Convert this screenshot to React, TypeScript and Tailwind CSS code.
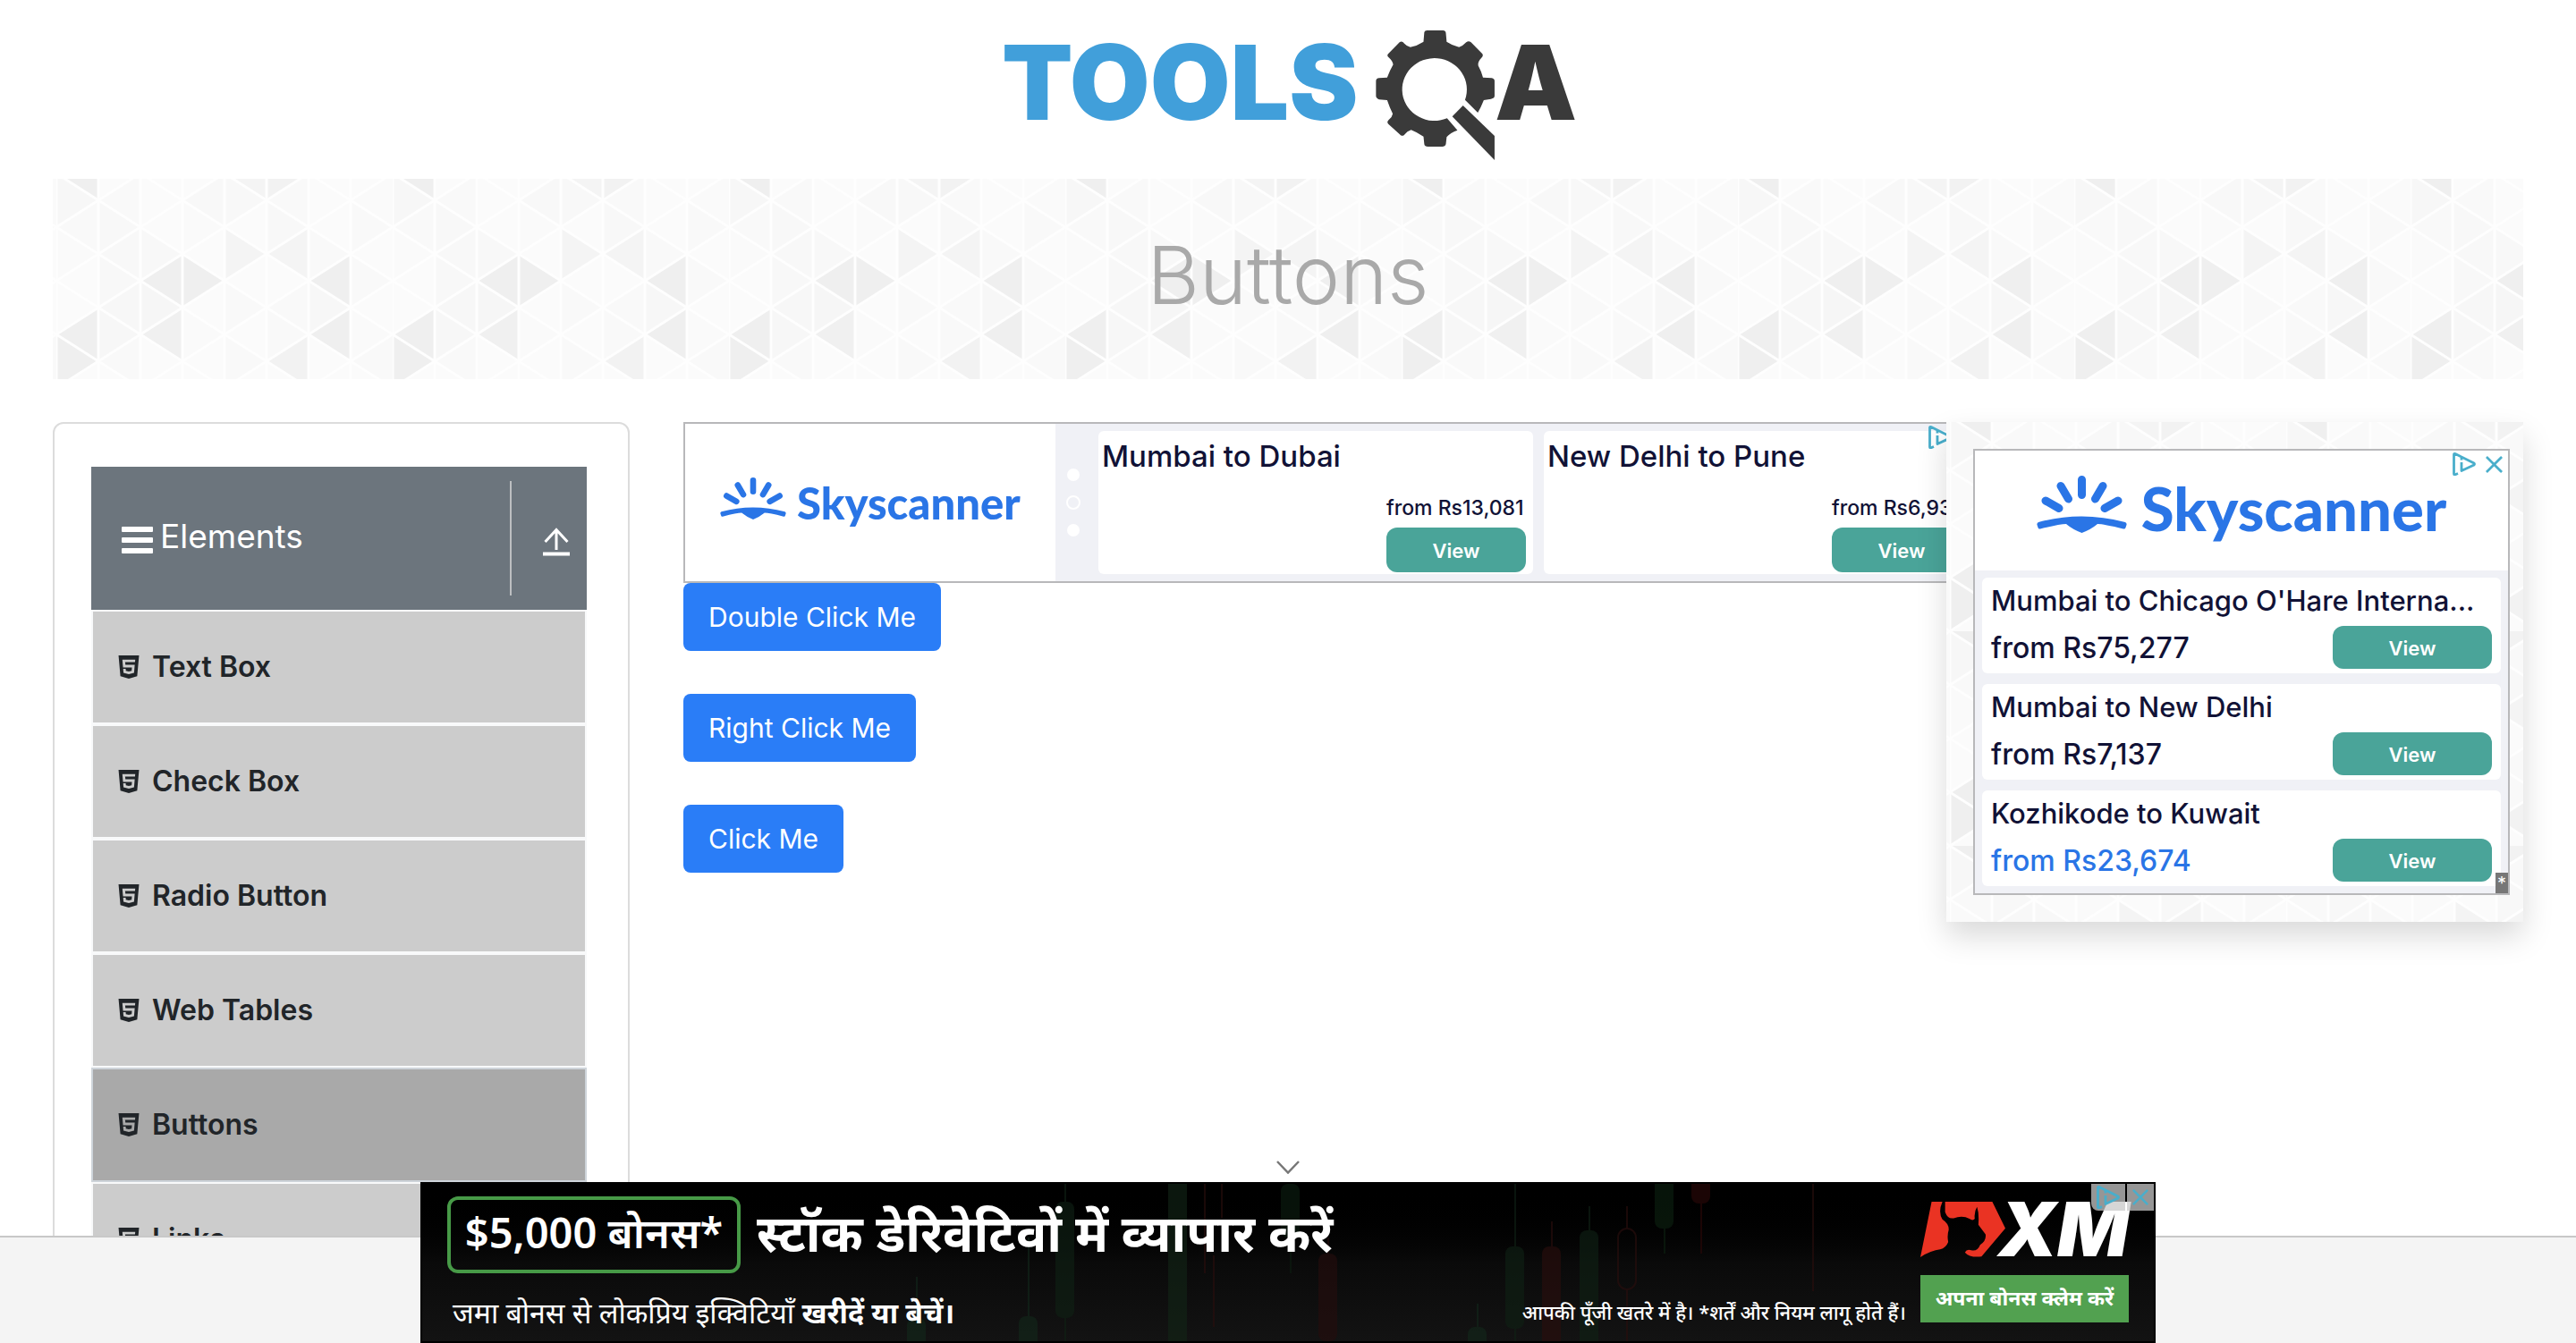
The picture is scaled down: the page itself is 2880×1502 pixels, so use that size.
import React from "react";
import { AiFillHtml5 } from "react-icons/ai";

/* Triangle shading of the banner texture: [column, row, fill] */
const TRIANGLES: [number, number, string][] = [
  [0, -1, "#efefef"], [4, -1, "#f4f4f4"], [5, -1, "#f2f2f2"],
  [0, 0, "#f7f7f7"], [1, 0, "#f9f9f9"], [3, 0, "#f8f8f8"], [4, 0, "#f8f8f8"], [5, 0, "#f9f9f9"], [7, 0, "#fafafa"],
  [0, 1, "#f9f9f9"], [1, 1, "#f8f8f8"], [5, 1, "#f8f8f8"], [7, 1, "#f9f9f9"], [3, 1, "#fafafa"],
  [0, 2, "#fafafa"], [1, 2, "#f8f8f8"], [2, 2, "#f8f8f8"], [4, 2, "#f4f4f4"], [5, 2, "#f4f4f4"], [6, 2, "#f9f9f9"],
  [1, 3, "#f8f8f8"], [2, 3, "#efefef"], [3, 3, "#efefef"], [6, 3, "#efefef"], [7, 3, "#f9f9f9"],
  [1, 4, "#f7f7f7"], [2, 4, "#f6f6f6"], [4, 4, "#f9f9f9"], [5, 4, "#f9f9f9"], [6, 4, "#f7f7f7"],
  [0, 5, "#efefef"], [1, 5, "#f7f7f7"], [2, 5, "#f0f0f0"], [3, 5, "#fafafa"], [5, 5, "#f9f9f9"], [6, 5, "#efefef"], [7, 5, "#fafafa"],
  [0, 6, "#efefef"], [1, 6, "#f9f9f9"], [4, 6, "#f9f9f9"], [5, 6, "#f2f2f2"], [7, 6, "#f9f9f9"],
];
const COL = 47;
const HALF = 30;

function Texture({ id }: { id: string }) {
  const tri = (c: number, j: number) => {
    const x0 = c * COL;
    const x1 = x0 + COL;
    const y = HALF * (j + 1);
    const left = Math.abs(j + c) % 2 === 1;
    return left
      ? `${x0},${y} ${x1},${y - HALF} ${x1},${y + HALF}`
      : `${x1},${y} ${x0},${y - HALF} ${x0},${y + HALF}`;
  };
  const lines: React.ReactNode[] = [];
  for (let c = 0; c < 8; c++) {
    lines.push(<path key={`v${c}`} d={`M${c * COL} 0V240`} />);
    for (let r = 0; r < 9; r++) {
      if ((r + c) % 2 === 0) {
        lines.push(<path key={`a${c}-${r}`} d={`M${c * COL} ${r * HALF}l${COL} ${HALF}M${c * COL} ${r * HALF}l${COL} ${-HALF}`} />);
      }
    }
  }
  return (
    <svg className="absolute inset-0 h-full w-full" aria-hidden="true">
      <defs>
        <pattern id={id} width={376} height={240} patternUnits="userSpaceOnUse" x={4} y={-6}>
          <rect width={376} height={240} fill="#fbfbfb" />
          {TRIANGLES.map(([c, j, f]) => (
            <polygon key={`${c}-${j}`} points={tri(c, j)} fill={f} />
          ))}
          <g stroke="#fefefe" strokeWidth={3}>{lines}</g>
        </pattern>
      </defs>
      <rect width="100%" height="100%" fill={`url(#${id})`} />
    </svg>
  );
}

function ToolsLogo() {
  return (
    <svg className="block h-[170px] w-[700px]" viewBox="0 0 700 170" role="img" aria-label="TOOLSQA">
      <text x="20" y="114" fontFamily="Inter, sans-serif" fontWeight="900" fontSize="116" fill="#419fda">TOOLS</text>
      <g transform="scale(0.4464 0.3333)" fill="#3a3a3a">
        <path d="M1103 48Q1104 42 1110 42H1150Q1156 42 1157 50L1159 80Q1172 92 1190 98Q1200 94 1208 82Q1214 75 1220 82L1248 120Q1252 126 1246 134Q1236 148 1238 160Q1246 180 1250 200L1272 202Q1279 204 1279 212V262Q1279 270 1270 272L1252 276Q1245 300 1237 318L1205 275A81 105 0 1 0 1160 337L1186 377Q1168 385 1159 400L1157 424Q1155 432 1148 432H1112Q1104 432 1103 424L1101 398Q1085 384 1070 376Q1060 380 1053 392Q1047 400 1041 390L1013 356Q1008 350 1014 342Q1023 332 1024 322Q1016 300 1010 276L990 274Q982 270 982 262V212Q982 203 990 202L1010 200Q1016 178 1025 157Q1024 145 1014 133Q1008 126 1013 120L1041 82Q1047 75 1053 86Q1060 96 1068 98Q1085 94 1101 80Z" />
        <path d="M1200 294L1279 396V477L1173 331Z" />
      </g>
      <text x="571" y="114" fontFamily="Inter, sans-serif" fontWeight="900" fontSize="116" fill="#3a3a3a">A</text>
    </svg>
  );
}

function Sunrise({ className }: { className: string }) {
  return (
    <svg className={className} viewBox="0 0 101 64" fill="#2a75e6" aria-hidden="true">
      <g stroke="#2a75e6" strokeWidth={9} strokeLinecap="round">
        <path d="M50.5 4.5V21.500M27 11.500L35.500 26M74 11.500L65.500 26M10 28L25 36.500M91 28L76 36.500" />
      </g>
      <path d="M2 52Q50 39 99 52Q101 53 100.500 55L99.500 58Q99 60 97 59.500Q75 54 68 54Q61 60 50.500 64Q40 60 33 54Q26 54 4 59.500Q2 60 1.500 58L.5 55Q0 53 2 52Z" />
    </svg>
  );
}

function AdChoices({ className }: { className: string }) {
  return (
    <svg className={className} viewBox="0 0 26 26" fill="none" stroke="#49aecb" strokeWidth={2.8} aria-hidden="true">
      <path d="M6 23.500L2.500 25Q1.500 25 1.500 23.500V2.500Q1.500 1 3 1.600L24 12Q25 13 24 14L10 20.500V11" strokeLinejoin="round" />
      <path d="M10 6V8.500" />
    </svg>
  );
}

function Cross({ className }: { className: string }) {
  return (
    <svg className={className} viewBox="0 0 20 20" stroke="#49aecb" strokeWidth={2.8} aria-hidden="true">
      <path d="M1 1L19 19M19 1L1 19" />
    </svg>
  );
}

const MENU = ["Text Box", "Check Box", "Radio Button", "Web Tables", "Buttons", "Links"];

function Sidebar() {
  return (
    <aside className="w-[645px] shrink-0 rounded-[12px] border-2 border-[#dcdcdc] pt-12 pr-[46px] pl-[41px]">
      <div className="flex h-40 items-center bg-[#6c757d] pl-[34px] text-white">
        <svg className="mt-1 h-[30px] w-[35px]" viewBox="0 0 35 30" fill="currentColor" aria-hidden="true">
          <rect width="35" height="6" rx="1" />
          <rect y="12" width="35" height="6" rx="1" />
          <rect y="24" width="35" height="6" rx="1" />
        </svg>
        <span className="ml-2 pb-1 text-[37px] leading-[44px]">Elements</span>
        <button type="button" aria-label="Collapse Elements" className="ml-auto flex h-32 w-[86px] items-center justify-center border-l-2 border-[#bdbfc1] pl-4">
          <svg className="mt-2 h-[32px] w-[30px]" viewBox="0 0 30 32" fill="none" stroke="currentColor" strokeWidth={3} aria-hidden="true">
            <path d="M15 25V3M2.500 16L15 2.500L27.500 16" />
            <path d="M0 29.500H30" strokeWidth={4} />
          </svg>
        </button>
      </div>
      <ul>
        {MENU.map((m) => (
          <li key={m} className={m === "Buttons" ? "border-2 border-[#ced4da]" : "border-2 border-[#f8f9fa]"}>
            <a href="#menu" className={m === "Buttons" ? "flex h-[124px] items-center bg-[#a9a9a9] pl-6" : "flex h-[124px] items-center bg-[#ccc] pl-6"}>
              <AiFillHtml5 className="size-8 text-[#212529]" />
              <span className="ml-2.5 text-[32px] leading-10 font-semibold text-[#212529]">{m}</span>
            </a>
          </li>
        ))}
      </ul>
    </aside>
  );
}

function WideOffer({ title, price }: { title: string; price: string }) {
  return (
    <div className="flex h-40 w-[486px] shrink-0 flex-col rounded-md bg-white pr-2 pl-1">
      <div className="mt-2 text-[33px] leading-10 font-medium">{title}</div>
      <div className="mt-auto mb-0.5 flex w-[156px] flex-col self-end">
        <div className="mb-2 text-[23px] leading-7 font-medium whitespace-nowrap">{price}</div>
        <button type="button" className="h-[50px] rounded-xl bg-[#4aa499] pt-0.5 text-[22px] font-semibold text-white">View</button>
      </div>
    </div>
  );
}

function WideAd() {
  return (
    <div className="overflow-hidden">
      <div className="relative flex h-[180px] w-[1456px] items-center border-2 border-[#b8b8ba] bg-[#f0f1f6] text-[#111236]">
        <div className="flex h-full w-[414px] shrink-0 items-center bg-white pl-[39px]">
          <Sunrise className="mt-[-10px] h-[47px] w-[74px]" />
          <span className="ml-3 font-[Lato] text-[49px] leading-[56px] font-black text-[#2a75e6]">Skyscanner</span>
        </div>
        <div className="flex w-12 shrink-0 flex-col items-center gap-4 pr-2">
          <span className="size-[14px] rounded-full bg-white" />
          <span className="size-4 rounded-full border-2 border-white" />
          <span className="size-[14px] rounded-full bg-white" />
        </div>
        <div className="flex gap-3">
          <WideOffer title="Mumbai to Dubai" price="from Rs13,081" />
          <WideOffer title="New Delhi to Pune" price="from Rs6,937" />
        </div>
        <AdChoices className="absolute top-0.5 left-[1390px] size-[26px]" />
      </div>
    </div>
  );
}

const OFFERS = [
  { title: "Mumbai to Chicago O'Hare Interna...", price: "from Rs75,277", tone: "text-[#111236]" },
  { title: "Mumbai to New Delhi", price: "from Rs7,137", tone: "text-[#111236]" },
  { title: "Kozhikode to Kuwait", price: "from Rs23,674", tone: "text-[#2a75e6]" },
];

function SidePanel() {
  return (
    <aside className="relative z-10 w-[645px] shrink-0 self-start p-[30px] pr-[15px] shadow-[0_16px_32px_rgba(0,0,0,0.15)]">
      <Texture id="panel-texture" />
      <div className="relative w-[600px] border-2 border-[#b8b8ba] bg-[#f0f1f6] text-[#111236]">
        <div className="flex h-[134px] items-center justify-center bg-white pb-1.5">
          <Sunrise className="mt-[-8px] h-[64px] w-[101px]" />
          <span className="ml-4 font-[Lato] text-[67px] leading-[76px] font-black text-[#2a75e6]">Skyscanner</span>
        </div>
        <div className="flex flex-col gap-3 p-2">
          {OFFERS.map((o) => (
            <div key={o.title} className="flex h-[107px] flex-col rounded-md bg-white pr-2.5 pl-2.5">
              <div className="mt-1.5 text-[31px] leading-10 font-medium whitespace-nowrap">{o.title}</div>
              <div className="mt-auto mb-1 flex items-center justify-between">
                <span className={`pt-0.5 text-[32px] leading-12 font-medium ${o.tone}`}>{o.price}</span>
                <button type="button" className="h-12 w-[178px] rounded-xl bg-[#4aa499] pt-0.5 text-[22px] font-semibold text-white">View</button>
              </div>
            </div>
          ))}
        </div>
        <button type="button" aria-label="About this ad" className="absolute top-0.5 right-[36px]">
          <AdChoices className="block size-[26px]" />
        </button>
        <button type="button" aria-label="Close ad" className="absolute top-1.5 right-1.5">
          <Cross className="block size-[19px]" />
        </button>
        <span className="absolute right-0 bottom-0 flex h-[23px] w-[14px] justify-center bg-[#777] text-[20px] leading-6 text-white">*</span>
      </div>
    </aside>
  );
}

/* Candlesticks: x, top, bottom, wick top, wick bottom, colour */
const CANDLES: [number, number, number, number, number, string][] = [
  [542, 150, 190, 104, 178, "#12261a"],
  [667, 148, 190, 60, 178, "#12261a"],
  [708, 20, 150, 0, 178, "#0f2014"],
  [834, -10, 190, 0, 0, "#122416"],
  [960, 0, 60, 0, 100, "#0c1c10"],
  [1002, 78, 176, 60, 176, "#240d0d"],
  [1169, 160, 190, 134, 178, "#12261a"],
  [1211, 70, 162, 0, 178, "#0f2014"],
  [1252, 70, 190, 42, 178, "#290e0d"],
  [1294, 52, 190, 25, 178, "#0f2014"],
  [1378, -10, 50, 0, 78, "#0c2010"],
  [1419, -10, 22, 0, 78, "#2a0808"],
];

function XmAd() {
  return (
    <div className="absolute bottom-0 left-1/2 h-[180px] w-[1940px] -translate-x-1/2 border-2 border-black bg-linear-to-b from-black via-[#0a0a0a] to-[#131313] font-['Noto_Sans','Noto_Sans_Devanagari',sans-serif] text-white">
      <svg className="absolute inset-0 h-full w-full opacity-65" aria-hidden="true">
        {CANDLES.map(([x, t, b, wt, wb, f]) => (
          <g key={x} fill={f}>
            <rect x={x} y={t} width="21" height={b - t} rx="8" />
            <rect x={x + 10} y={wt} width="2" height={wb - wt} />
          </g>
        ))}
        <g stroke="#290e0d" strokeWidth="2" fill="none">
          <rect x="1337" y="50" width="20" height="68" rx="10" />
          <path d="M1347 25V50M1347 118V178M875 0V100M894 0V38M885 80V160M1555 0V120" />
        </g>
      </svg>
      <div className="relative flex h-full justify-between">
        <div className="flex flex-col pt-3.5 pl-7">
          <div className="flex items-center">
            <span className="flex h-[86px] w-[328px] items-center justify-center rounded-xl border-4 border-[#479a47] pb-1.5 text-[47px] leading-[60px] font-semibold whitespace-nowrap">$5,000 बोनस*</span>
            <span className="ml-[18px] pb-1.5 text-[57px] leading-[80px] font-bold whitespace-nowrap">स्टॉक डेरिवेटिवों में व्यापार करें</span>
          </div>
          <p className="mt-5 pl-1.5 text-[32px] leading-12 whitespace-nowrap">
            जमा बोनस से लोकप्रिय इक्विटियाँ <b>खरीदें या बेचें।</b>
          </p>
        </div>
        <div className="flex items-end gap-4 pr-7 pb-[21px]">
          <p className="-mb-1 text-[22px] leading-8 font-medium whitespace-nowrap">आपकी पूँजी खतरे में है। *शर्तें और नियम लागू होते हैं।</p>
          <div className="flex w-[233px] flex-col">
            <div className="mb-5 flex h-[62px] items-center">
              <svg className="h-[62px] w-[95px] shrink-0" viewBox="981 131 189 185" preserveAspectRatio="none" fill="#ea3323" aria-hidden="true">
                <path d="M1006 131H1030Q1020 165 1030 190Q1045 205 1044 225Q1040 245 1043 265Q1038 285 1025 290Q1005 293 981 316Z" />
                <path d="M1036 131H1141L1170 220L1117 314Q1090 318 1080 300Q1084 288 1094 293Q1108 298 1114 275Q1128 262 1126 240Q1120 228 1110 208Q1112 170 1107 148Q1100 165 1102 188Q1098 196 1090 188Q1075 175 1055 186Q1042 190 1036 165Z" />
              </svg>
              <span className="-ml-2 font-[Inter] text-[84px] leading-[62px] font-black italic">XM</span>
            </div>
            <button type="button" className="h-[53px] bg-[#52a150] pb-1 text-[23px] leading-8 font-bold whitespace-nowrap">अपना बोनस क्लेम करें</button>
          </div>
        </div>
      </div>
      <div className="absolute top-0 right-0 flex gap-0.5">
        <button type="button" aria-label="About this ad" className="flex h-[30px] w-[38px] items-center justify-center rounded-bl-lg bg-[#c8c8c8]/75">
          <AdChoices className="size-[26px]" />
        </button>
        <button type="button" aria-label="Close ad" className="flex h-[30px] w-[30px] items-center justify-center bg-[#c8c8c8]/75">
          <Cross className="size-[18px]" />
        </button>
      </div>
    </div>
  );
}

export default function App() {
  return (
    <div className="flex h-screen flex-col overflow-hidden bg-white font-[Inter,sans-serif]">
      <div className="min-h-0 flex-1 overflow-hidden">
        <header className="flex h-[200px] justify-center pt-5 pl-5">
          <a href="#home"><ToolsLogo /></a>
        </header>
        <div className="relative mx-[59px] flex h-56 items-center justify-center">
          <Texture id="banner-texture" />
          <h1 className="relative pb-2 text-[90px] leading-[112px] font-[350] text-[#a9a9a9]">Buttons</h1>
        </div>
        <div className="mx-[59px] mt-12 flex">
          <Sidebar />
          <main className="ml-[60px] min-w-0 flex-1">
            <WideAd />
            <div className="flex flex-col items-start gap-12">
              {["Double Click Me", "Right Click Me", "Click Me"].map((t) => (
                <button key={t} type="button" className="h-[76px] rounded-lg bg-[#2a7df7] px-7 text-[30px] leading-10 text-white">{t}</button>
              ))}
            </div>
          </main>
          <SidePanel />
        </div>
      </div>
      <footer className="relative h-[120px] shrink-0 border-t-2 border-[#c8c8c8] bg-[#f4f4f4]">
        <button type="button" aria-label="Hide ad" className="absolute -top-[86px] left-1/2 -translate-x-1/2">
          <svg className="block h-[15px] w-[26px]" viewBox="0 0 26 15" fill="none" stroke="#777" strokeWidth={2.5} aria-hidden="true">
            <path d="M1 1L13 13.500L25 1" />
          </svg>
        </button>
        <XmAd />
      </footer>
    </div>
  );
}
